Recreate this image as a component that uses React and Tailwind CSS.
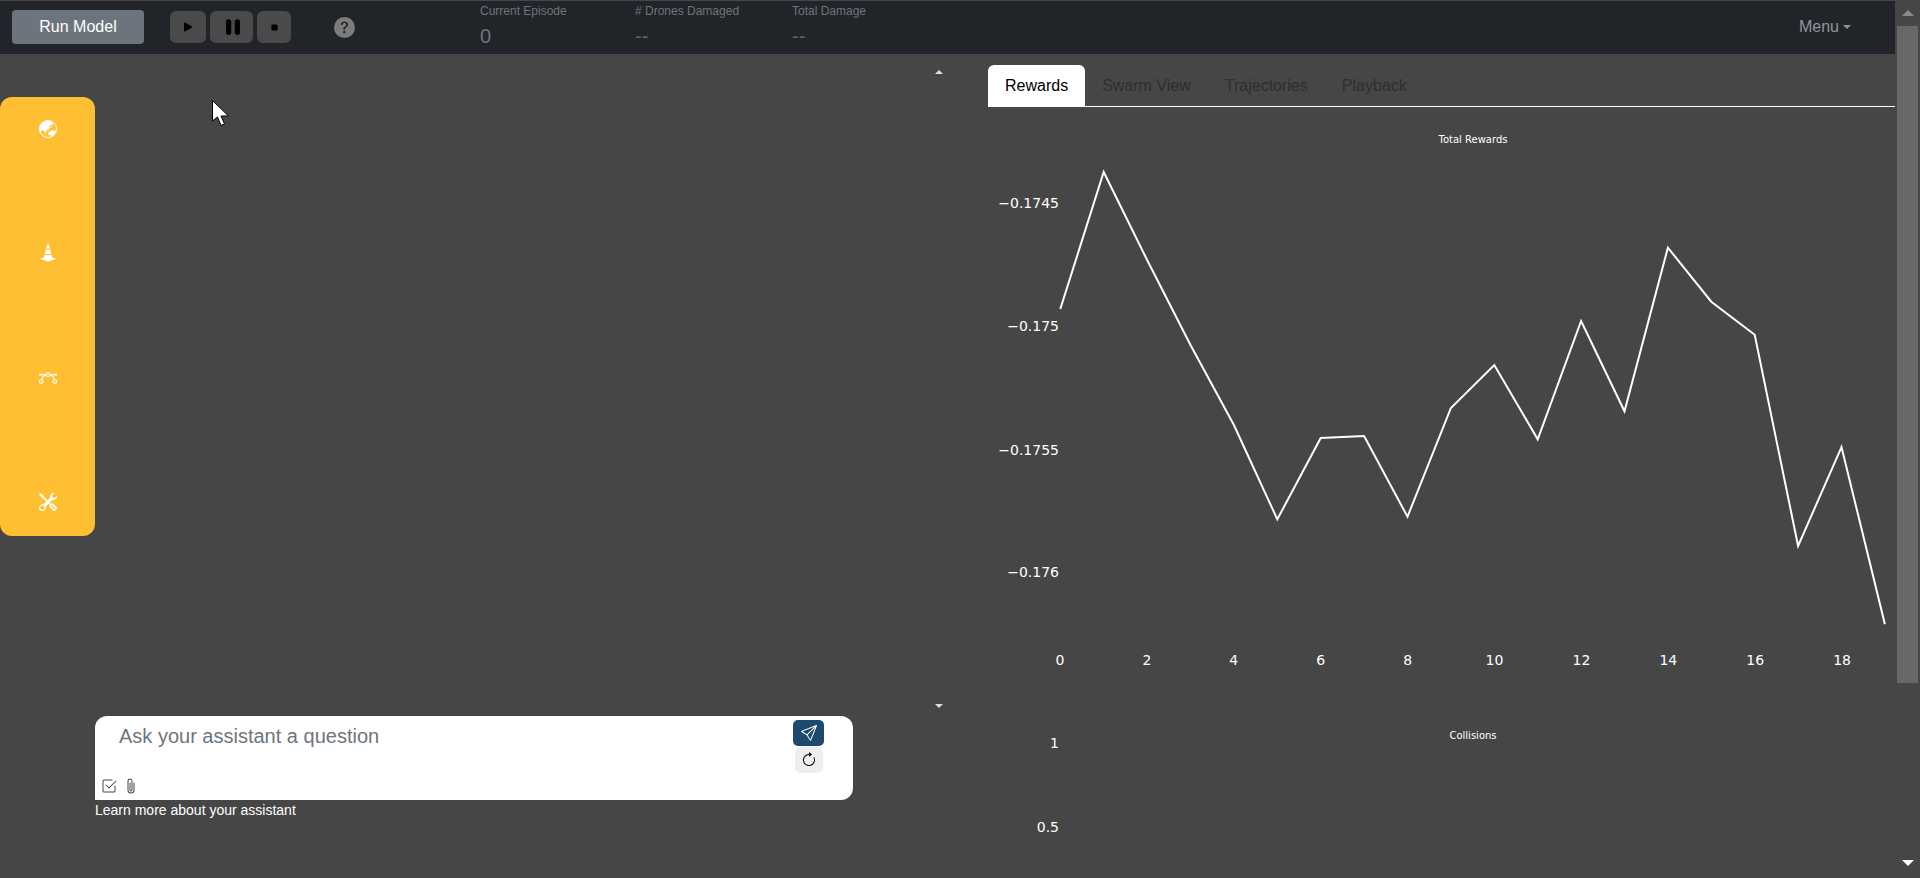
import React from 'react';
import {
  BsArrowClockwise,
  BsBezier,
  BsCheck2Square,
  BsConeStriped,
  BsGlobeAsiaAustralia,
  BsPaperclip,
  BsPauseFill,
  BsPlayFill,
  BsQuestionCircleFill,
  BsSend,
  BsStopFill,
  BsTools,
} from 'react-icons/bs';

const rewards = [309, 172, 260, 345, 425, 519.3, 438, 436, 516.7, 408, 365, 439.3, 321, 411.3, 247.7, 301.7, 334.7, 546, 447, 624.3];

const Stat = ({ label, value, width, big }) => (
  <div className={`${width} flex flex-col pt-px text-[#6c757d]`}>
    <span className="text-xs leading-[18px]">{label}</span>
    <span className={`mt-1 text-xl leading-[24px] ${big ? '' : 'text-[#5f666d]'}`}>{value}</span>
  </div>
);

const RewardsChart = () => {
  // svg starts at y=107 on the page, x=988
  const points = rewards.map((y, i) => `${72.3 + i * 43.4},${y - 107}`).join(' ');
  return (
    <svg width="907" height="600" className="block shrink-0">
      <text x="485" y="36" textAnchor="middle" fontSize="10" fill="#fff" fontFamily="DejaVu Sans, sans-serif">
        Total Rewards
      </text>
      {[['−0.1745', 101], ['−0.175', 224], ['−0.1755', 348], ['−0.176', 470]].map(([t, y]) => (
        <text key={t} x="71" y={y} textAnchor="end" fontSize="14" fill="#fff" fontFamily="DejaVu Sans, sans-serif">
          {t}
        </text>
      ))}
      {[0, 2, 4, 6, 8, 10, 12, 14, 16, 18].map((t, i) => (
        <text key={t} x={72 + i * 86.9} y="558" textAnchor="middle" fontSize="14" fill="#fff" fontFamily="DejaVu Sans, sans-serif">
          {t}
        </text>
      ))}
      <polyline points={points} fill="none" stroke="#fff" strokeWidth="2" />
    </svg>
  );
};

const CollisionsChart = () => (
  <svg width="907" height="171" className="block shrink-0">
    <text x="485" y="32" textAnchor="middle" fontSize="10" fill="#fff" fontFamily="DejaVu Sans, sans-serif">
      Collisions
    </text>
    <text x="71" y="41" textAnchor="end" fontSize="14" fill="#fff" fontFamily="DejaVu Sans, sans-serif">1</text>
    <text x="71" y="125" textAnchor="end" fontSize="14" fill="#fff" fontFamily="DejaVu Sans, sans-serif">0.5</text>
  </svg>
);

const App = () => {
  return (
    <div className="relative flex h-screen overflow-hidden bg-[#464646] font-['Liberation_Sans',Arial,sans-serif]">
      <div className="flex w-[1895px] flex-col">
        {/* top bar */}
        <div className="mt-px flex h-[53px] shrink-0 items-center bg-[#212529] pb-px">
          <button className="ml-3 h-[34px] w-[132px] rounded bg-[#6c757d] text-base text-white">Run Model</button>
          <div className="ml-[26px] flex gap-1">
            <button className="flex h-8 w-9 items-center justify-center rounded-md bg-[#4a4a4a] text-[16px] text-black"><BsPlayFill /></button>
            <button className="flex h-8 w-[43px] items-center justify-center rounded-md bg-[#4a4a4a] pl-[3px] text-[28px] text-black"><BsPauseFill /></button>
            <button className="flex h-8 w-[34px] items-center justify-center rounded-md bg-[#4a4a4a] text-[11px] text-black"><BsStopFill /></button>
          </div>
          <BsQuestionCircleFill className="ml-[43px] text-[21px] text-[#7c7c7c]" />
          <div className="ml-[125px] flex self-start">
            <Stat label="Current Episode" value="0" width="w-[155px]" big />
            <Stat label="# Drones Damaged" value="--" width="w-[157px]" />
            <Stat label="Total Damage" value="--" width="w-[120px]" />
          </div>
          <button className="ml-auto mr-[44px] flex items-center gap-1 text-base text-[#8d949b]">
            Menu
            <span className="h-0 w-0 border-x-[4px] border-t-[4px] border-x-transparent border-t-[#8d949b]" />
          </button>
        </div>

        <div className="flex min-h-0 flex-1">
          {/* left pane */}
          <div className="relative w-[950px] shrink-0">
            <span className="absolute left-[935px] top-[16px] h-0 w-0 border-x-[4px] border-b-[4px] border-x-transparent border-b-[#ddd]" />
            <span className="absolute left-[935px] top-[650px] h-0 w-0 border-x-[4px] border-t-[4px] border-x-transparent border-t-[#ddd]" />

            <div className="mt-[43px] flex h-[439px] w-[95px] flex-col items-center justify-between rounded-[12px] bg-[#ffbf33] pb-[25px] pt-[23px] text-[18px] text-white">
              <BsGlobeAsiaAustralia />
              <BsConeStriped />
              <BsBezier />
              <BsTools />
            </div>

            <div className="ml-[95px] mt-[180px] w-[758px]">
              <div className="flex h-[84px] rounded-t-[12px] rounded-br-[12px] bg-white">
                <div className="flex min-w-0 flex-1 flex-col justify-between pb-[6px] pl-[6px]">
                  <div className="pl-[18px] pt-[5px] text-xl leading-[30px] text-[#6c757d]">Ask your assistant a question</div>
                  <div className="flex items-center gap-[6px] text-[#444]">
                    <BsCheck2Square className="text-[16px]" />
                    <BsPaperclip className="text-[16px]" />
                  </div>
                </div>
                <div className="mr-[29px] flex flex-col items-center pt-1">
                  <button className="flex h-[26px] w-[31px] items-center justify-center rounded-[5px] bg-[#1f4a70] text-[16px] text-white"><BsSend /></button>
                  <button className="mt-px flex h-[26px] w-[28px] items-center justify-center rounded-[5px] bg-[#eeeeee] text-[16px] text-black"><BsArrowClockwise /></button>
                </div>
              </div>
              <p className="text-sm leading-5 text-white">Learn more about your assistant</p>
            </div>
          </div>

          {/* right pane */}
          <div className="ml-[38px] flex min-w-0 flex-1 flex-col overflow-hidden pt-[11px]">
            <div className="flex h-[42px] shrink-0 border-b border-white">
              <span className="h-[42px] rounded-t-md bg-white px-[17px] py-[9px] text-base leading-6 text-black">Rewards</span>
              {['Swarm View', 'Trajectories', 'Playback'].map((t) => (
                <span key={t} className="px-[17px] py-[9px] text-base leading-6 text-[#2c2f33]">{t}</span>
              ))}
            </div>
            <RewardsChart />
            <CollisionsChart />
          </div>
        </div>
      </div>

      {/* scrollbar */}
      <div className="flex w-[25px] flex-col items-center bg-[#464646] pt-[10px]">
        <span className="h-0 w-0 border-x-[6px] border-b-[6px] border-x-transparent border-b-[#8a8a8a]" />
        <div className="mt-[10px] h-[657px] w-[21px] bg-[#686868]" />
        <span className="mt-[177px] h-0 w-0 border-x-[6px] border-t-[6px] border-x-transparent border-t-white" />
      </div>

      {/* mouse pointer in the capture */}
      <svg width="19" height="28" viewBox="0 0 19 28" className="absolute left-[211px] top-[99px]">
        <path d="M1.5 1.5 V22 L6.5 18 L10 26.5 L13.5 25 L10 17 H17.5 Z" fill="#fff" stroke="#000" strokeWidth="1" />
      </svg>
    </div>
  );
};

export default App;
